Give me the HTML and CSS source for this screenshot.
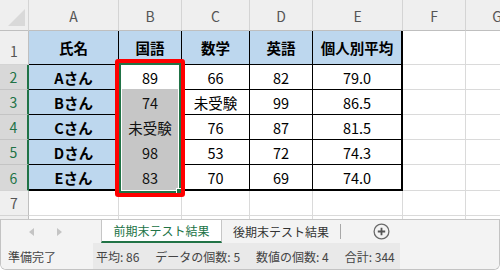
FILE: index.html
```html
<!DOCTYPE html>
<html lang="ja">
<head>
<meta charset="utf-8">
<title>Excel</title>
<link rel="stylesheet" href="styles.css">
</head>
<body>
<div class="sheet">
  <div class="grid">
    <div class="corner"><span class="tri"></span></div>
    <div class="ch">A</div><div class="ch">B</div><div class="ch">C</div><div class="ch">D</div><div class="ch">E</div><div class="ch">F</div><div class="ch">G</div>

    <div class="rh r1">1</div>
    <div class="c t hd">氏名</div><div class="c t hd">国語</div><div class="c t hd">数学</div><div class="c t hd">英語</div><div class="c t hd e">個人別平均</div><div class="c"></div><div class="c"></div>

    <div class="rh sel">2</div>
    <div class="c t hd">Aさん</div><div class="c t sb">89</div><div class="c t">66</div><div class="c t">82</div><div class="c t e">79.0</div><div class="c"></div><div class="c"></div>

    <div class="rh sel">3</div>
    <div class="c t hd">Bさん</div><div class="c t g">74</div><div class="c t">未受験</div><div class="c t">99</div><div class="c t e">86.5</div><div class="c"></div><div class="c"></div>

    <div class="rh sel">4</div>
    <div class="c t hd">Cさん</div><div class="c t g">未受験</div><div class="c t">76</div><div class="c t">87</div><div class="c t e">81.5</div><div class="c"></div><div class="c"></div>

    <div class="rh sel">5</div>
    <div class="c t hd">Dさん</div><div class="c t g">98</div><div class="c t">53</div><div class="c t">72</div><div class="c t e">74.3</div><div class="c"></div><div class="c"></div>

    <div class="rh sel last">6</div>
    <div class="c t hd lb">Eさん</div><div class="c t g lb">83</div><div class="c t lb">70</div><div class="c t lb">69</div><div class="c t e lb">74.0</div><div class="c"></div><div class="c"></div>

    <div class="rh">7</div>
    <div class="c"></div><div class="c"></div><div class="c"></div><div class="c"></div><div class="c"></div><div class="c"></div><div class="c"></div>

    <div class="rh part"></div>
    <div class="c part"></div><div class="c part"></div><div class="c part"></div><div class="c part"></div><div class="c part"></div><div class="c part"></div><div class="c part"></div>
  </div>
  <div class="selbox"></div>
  <div class="handle"></div>
  <div class="redbox"></div>
</div>
<div class="footer">
  <div class="tabs">
    <div class="nav"><span class="arr left"></span><span class="arr right"></span></div>
    <div class="tab active">前期末テスト結果</div>
    <div class="tab">後期末テスト結果</div>
    <div class="sep"></div>
    <div class="add">
      <svg width="17" height="17" viewBox="0 0 17 17"><circle cx="8.5" cy="8.5" r="7.4" fill="none" stroke="#6a6a6a" stroke-width="1.3"/><path d="M8.5 4.8v7.4M4.8 8.5h7.4" stroke="#555" stroke-width="1.8"/></svg>
    </div>
  </div>
  <div class="status">
    <div class="ready">準備完了</div>
    <div class="stats"><span>平均: 86</span><span>データの個数: 5</span><span>数値の個数: 4</span><span>合計: 344</span></div>
  </div>
</div>
</body>
</html>
```
FILE: styles.css
```css
* { box-sizing: border-box; }
html, body { margin: 0; padding: 0; }
body {
  width: 500px;
  height: 270px;
  overflow: hidden;
  background: #fff;
  font-family: "Noto Sans CJK JP", "Noto Sans", sans-serif;
}

.sheet {
  position: relative;
  width: 500px;
  height: 219px;
  overflow: hidden;
}

.grid {
  display: grid;
  width: 529px;
  grid-template-columns: 29px 90px 63px 68px 63px 90px 63px 63px;
  grid-template-rows: 31px 34px 25px 25px 25px 25px 26px 25px 3px;
}

.grid > div {
  display: flex;
  align-items: center;
  justify-content: center;
  white-space: nowrap;
  border-right: 1px solid #dadada;
  border-bottom: 1px solid #dadada;
  font-size: 14.5px;
  color: #000;
}

.grid > .corner {
  background: #efefef;
  align-items: flex-end;
  justify-content: flex-end;
  padding: 0 3px 4px 0;
  border-right-color: #d4d4d4;
  border-bottom-color: #bfbfbf;
}
.tri {
  width: 0;
  height: 0;
  border-left: 17px solid transparent;
  border-bottom: 17px solid #d9d9d9;
}

.grid > .ch {
  background: #efefef;
  color: #555;
  font-size: 14px;
  align-items: flex-end;
  padding-bottom: 4px;
  border-right-color: #d4d4d4;
  border-bottom-color: #bfbfbf;
}

.grid > .rh {
  background: #efefef;
  color: #555;
  font-size: 14px;
  border-right-color: #bfbfbf;
  border-bottom-color: #d4d4d4;
}
.grid > .r1 { padding-top: 6px; }
.grid > .rh.sel {
  background: #d8d8d8;
  color: #217346;
  border-right: 2px solid #217346;
  border-bottom-color: #c4c4c4;
}
.grid > .rh.last { border-bottom-color: #d4d4d4; }
.grid > .rh.part { background: #efefef; border-bottom: none; }
.grid > .c.part { border-bottom: none; }

.grid > .t {
  border-right-color: #000;
  border-bottom-color: #000;
}
.grid > .hd {
  background: #bdd7ee;
  font-weight: bold;
}
.grid > .e { border-right: 2px solid #000; }
.grid > .lb { border-bottom: 2px solid #000; }
.grid > .sb { border-bottom-color: #c6c6c6; }
.grid > .g {
  background: #c6c6c6;
  border-bottom-color: #c6c6c6;
  color: #111;
}

.selbox {
  position: absolute;
  left: 119px;
  top: 63px;
  width: 62px;
  height: 130px;
  border: 2px solid #217346;
  box-shadow: inset 0 0 0 1px #fff;
}
.handle {
  position: absolute;
  left: 176px;
  top: 188px;
  width: 7px;
  height: 7px;
  background: #217346;
  border-left: 1px solid #fff;
  border-top: 1px solid #fff;
}
.redbox {
  position: absolute;
  left: 115px;
  top: 59px;
  width: 70px;
  height: 138px;
  border: 4px solid #ff0000;
  border-radius: 3px;
}

.footer {
  height: 51px;
  border: 1px solid #c3c3c3;
  border-top: none;
  border-radius: 0 0 6px 6px;
  overflow: hidden;
}

.tabs {
  display: flex;
  align-items: stretch;
  height: 24px;
  background: #f3f3f3;
  border-top: 1px solid #c6c6c6;
  font-size: 12px;
}
.nav {
  width: 100px;
  display: flex;
  align-items: center;
  padding-left: 28px;
  gap: 23px;
}
.arr {
  width: 0;
  height: 0;
  border-top: 4px solid transparent;
  border-bottom: 4px solid transparent;
}
.arr.left { border-right: 5px solid #c4c4c4; }
.arr.right { border-left: 5px solid #c4c4c4; }

.tab {
  display: flex;
  align-items: center;
  justify-content: center;
  padding: 0 11px;
  color: #333;
  white-space: nowrap;
}
.tab.active {
  width: 121px;
  padding: 0;
  background: #fff;
  color: #217346;
  border-left: 1px solid #c6c6c6;
  border-right: 1px solid #c6c6c6;
  border-bottom: 2px solid #217346;
}
.sep {
  width: 1px;
  height: 15px;
  margin-top: 4px;
  background: #a8a8a8;
}
.add {
  display: flex;
  align-items: center;
  margin-left: 32px;
}
.add svg { display: block; }

.status {
  display: flex;
  height: 26px;
  background: #f3f3f3;
  font-size: 12px;
  color: #444;
}
.ready {
  width: 92px;
  display: flex;
  align-items: center;
  padding-left: 7px;
}
.stats {
  display: flex;
  align-items: center;
  gap: 16px;
  padding: 0 5px 0 3px;
  background: #e9e9e9;
  white-space: nowrap;
}
```
